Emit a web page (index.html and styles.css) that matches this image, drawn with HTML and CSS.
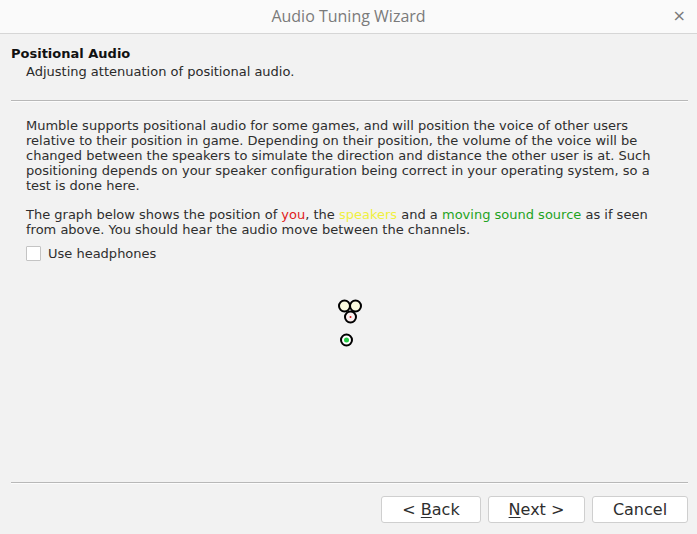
FILE: index.html
```html
<!DOCTYPE html>
<html>
<head>
<meta charset="utf-8">
<link rel="stylesheet" href="styles.css">
</head>
<body>
<div class="window">
  <div class="titlebar">
    <span class="title">Audio Tuning Wizard</span>
    <span class="close">×</span>
  </div>
  <div class="content">
    <div class="header">
      <div class="h-title">Positional Audio</div>
      <div class="h-sub">Adjusting attenuation of positional audio.</div>
    </div>
    <div class="sep"></div>
    <div class="page">
      <p class="para">Mumble supports positional audio for some games, and will position the voice of other users relative to their position in game. Depending on their position, the volume of the voice will be changed between the speakers to simulate the direction and distance the other user is at. Such positioning depends on your speaker configuration being correct in your operating system, so a test is done here.</p>
      <p class="para">The graph below shows the position of <span class="red">you</span>, the <span class="yellow">speakers</span> and a <span class="green">moving sound source</span> as if seen from above. You should hear the audio move between the channels.</p>
      <label class="check"><span class="box"></span><span>Use headphones</span></label>
      <div class="graph">
        <svg width="30" height="52" viewBox="0 0 30 52">
          <circle cx="7.5" cy="7" r="5.5" fill="#fbfbe0" stroke="#000" stroke-width="2"/>
          <circle cx="18.5" cy="7" r="5.5" fill="#fbfbe0" stroke="#000" stroke-width="2"/>
          <circle cx="13.5" cy="18" r="5.5" fill="#fdf0f0" stroke="#000" stroke-width="2"/>
          <circle cx="13.5" cy="18" r="1" fill="#d02020"/>
          <circle cx="9.5" cy="41" r="5.5" fill="#fff" stroke="#000" stroke-width="2"/>
          <circle cx="9.5" cy="41" r="2.5" fill="#22cc44"/>
        </svg>
      </div>
    </div>
    <div class="sep bottom"></div>
    <div class="buttons">
      <button class="btn back">&lt; <u>B</u>ack</button>
      <button class="btn next"><u>N</u>ext &gt;</button>
      <button class="btn cancel">Cancel</button>
    </div>
  </div>
</div>
</body>
</html>
```
FILE: styles.css
```css
html, body {
  margin: 0;
  padding: 0;
  background: #f2f2f2;
}
.window {
  width: 697px;
  height: 534px;
  display: flex;
  flex-direction: column;
  font-family: "DejaVu Sans", sans-serif;
  font-size: 13px;
  color: #2e2e2e;
  overflow: hidden;
}
.titlebar {
  height: 33px;
  background: #fafafa;
  border-bottom: 1px solid #d6d6d6;
  display: flex;
  align-items: center;
  justify-content: center;
  position: relative;
  flex-shrink: 0;
}
.title {
  font-family: "Open Sans", "Noto Sans", sans-serif;
  font-size: 16px;
  color: #7a7a7a;
  margin-top: -2px;
}
.close {
  position: absolute;
  right: 11px;
  top: 6px;
  font-family: "DejaVu Sans", sans-serif;
  font-size: 16px;
  color: #7a7a7a;
}
.content {
  flex: 1;
  display: flex;
  flex-direction: column;
  padding: 0 9px 0 11px;
}
.header {
  padding-top: 12px;
  height: 54px;
}
.h-title {
  font-weight: bold;
  color: #111;
  line-height: 16px;
}
.h-sub {
  padding-left: 15px;
  line-height: 20px;
  color: #2a2a2a;
}
.sep {
  height: 1px;
  background: #b8b8b8;
  border-bottom: 1px solid #fcfcfc;
}
.page {
  flex: 1;
  padding: 16px 0 0 15px;
  display: flex;
  flex-direction: column;
}
.para {
  margin: 0 0 14px 0;
  line-height: 15px;
  width: 640px;
}
.red { color: #e01b1b; }
.yellow { color: #f0f040; }
.green { color: #1fa31f; }
.check {
  display: flex;
  align-items: center;
  gap: 7px;
  margin-top: -5px;
}
.box {
  width: 13px;
  height: 13px;
  border: 1px solid #c4c4c4;
  background: #fff;
  border-radius: 1px;
}
.graph {
  flex: 1;
  display: flex;
  justify-content: center;
  align-items: flex-start;
  padding-top: 38px;
  padding-right: 11px;
}
.sep.bottom {
  margin-bottom: 12px;
}
.buttons {
  display: flex;
  justify-content: flex-end;
  gap: 7px;
  margin-bottom: 11px;
}
.btn {
  font-family: "DejaVu Sans", sans-serif;
  font-size: 16px;
  color: #2e2e2e;
  background: #fff;
  border: 1px solid #cfcfcf;
  border-radius: 3px;
  height: 27px;
  width: 100px;
  padding: 0;
}
.btn.next { width: 97px; }
.btn.cancel { width: 96px; }
.btn u { text-decoration-thickness: 1px; text-underline-offset: 2px; }
```
